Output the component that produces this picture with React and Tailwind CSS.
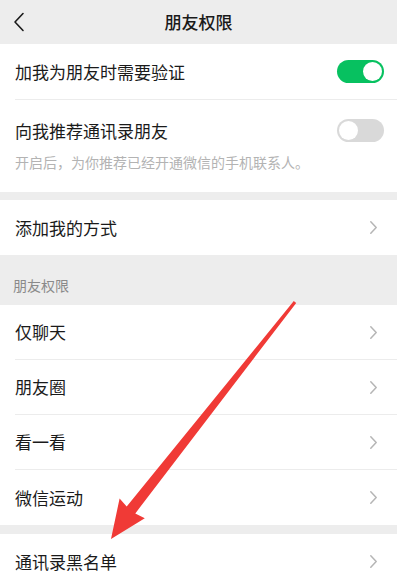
import React from "react";

const FONT = { fontFamily: '"Noto Sans CJK SC", "Noto Sans", sans-serif' };

function Chevron() {
  return (
    <svg width="9" height="15" viewBox="0 0 9 15" className="shrink-0">
      <path d="M1.8 1.8 L7.2 7.5 L1.8 13.2" fill="none" stroke="#b5b5b5" strokeWidth="1.5" strokeLinecap="round" strokeLinejoin="round" />
    </svg>
  );
}

function Toggle({ on }) {
  return on ? (
    <div className="flex h-[23px] w-[47px] items-center justify-end rounded-full bg-[#07c160] pr-[2px]">
      <div className="h-[19px] w-[19px] rounded-full bg-white" />
    </div>
  ) : (
    <div className="flex h-[23px] w-[47px] items-center rounded-full bg-[#d9d9d9] pl-[2px]">
      <div className="h-[19px] w-[19px] rounded-full bg-white" />
    </div>
  );
}

function LinkRow({ label, divider }) {
  return (
    <div className="flex h-[55px] items-center pl-[15px]">
      <div className={`flex h-full flex-1 items-center justify-between pr-[19px] ${divider ? "border-b border-[#ececec]" : ""}`}>
        <span className="text-[17px] text-[#1a1a1a]">{label}</span>
        <Chevron />
      </div>
    </div>
  );
}

export default function App() {
  return (
    <div className="relative h-[582px] w-[397px] overflow-hidden bg-[#ededed]" style={FONT}>
      <header className="relative flex h-[44px] items-center justify-center">
        <svg width="12" height="20" viewBox="0 0 12 20" className="absolute left-[13px] top-[12px]">
          <path d="M10 1.5 L2 10 L10 18.5" fill="none" stroke="#1a1a1a" strokeWidth="1.6" strokeLinecap="round" strokeLinejoin="round" />
        </svg>
        <h1 className="text-[17px] font-medium text-[#1a1a1a]">朋友权限</h1>
      </header>

      <section className="bg-white">
        <div className="flex h-[56px] items-center pl-[15px]">
          <div className="flex h-full flex-1 items-center justify-between border-b border-[#ececec] pr-[13px]">
            <span className="text-[17px] text-[#1a1a1a]">加我为朋友时需要验证</span>
            <Toggle on />
          </div>
        </div>
        <div className="flex h-[92px] flex-col px-[15px] pt-[18px]">
          <div className="flex items-center justify-between">
            <span className="text-[17px] text-[#1a1a1a]">向我推荐通讯录朋友</span>
            <div className="mr-[-2px]">
              <Toggle />
            </div>
          </div>
          <p className="mt-[8px] text-[14px] text-[#b3b3b3]">开启后，为你推荐已经开通微信的手机联系人。</p>
        </div>
      </section>

      <section className="mt-[8px] bg-white">
        <LinkRow label="添加我的方式" />
      </section>

      <div className="flex h-[50px] items-end px-[13px] pb-[9px]">
        <span className="text-[14px] text-[#8a8a8a]">朋友权限</span>
      </div>

      <section className="bg-white">
        <LinkRow label="仅聊天" divider />
        <LinkRow label="朋友圈" divider />
        <LinkRow label="看一看" divider />
        <LinkRow label="微信运动" />
      </section>

      <section className="mt-[9px] bg-white">
        <LinkRow label="通讯录黑名单" />
      </section>

      <svg className="pointer-events-none absolute left-0 top-0" width="397" height="582" viewBox="0 0 397 582">
        <polygon
          points="293.8,301.1 296.2,302.9 135.3,513.4 144.8,518.3 111,539 119.6,498.5 126.7,506.6"
          fill="#f03a36"
        />
      </svg>
    </div>
  );
}
